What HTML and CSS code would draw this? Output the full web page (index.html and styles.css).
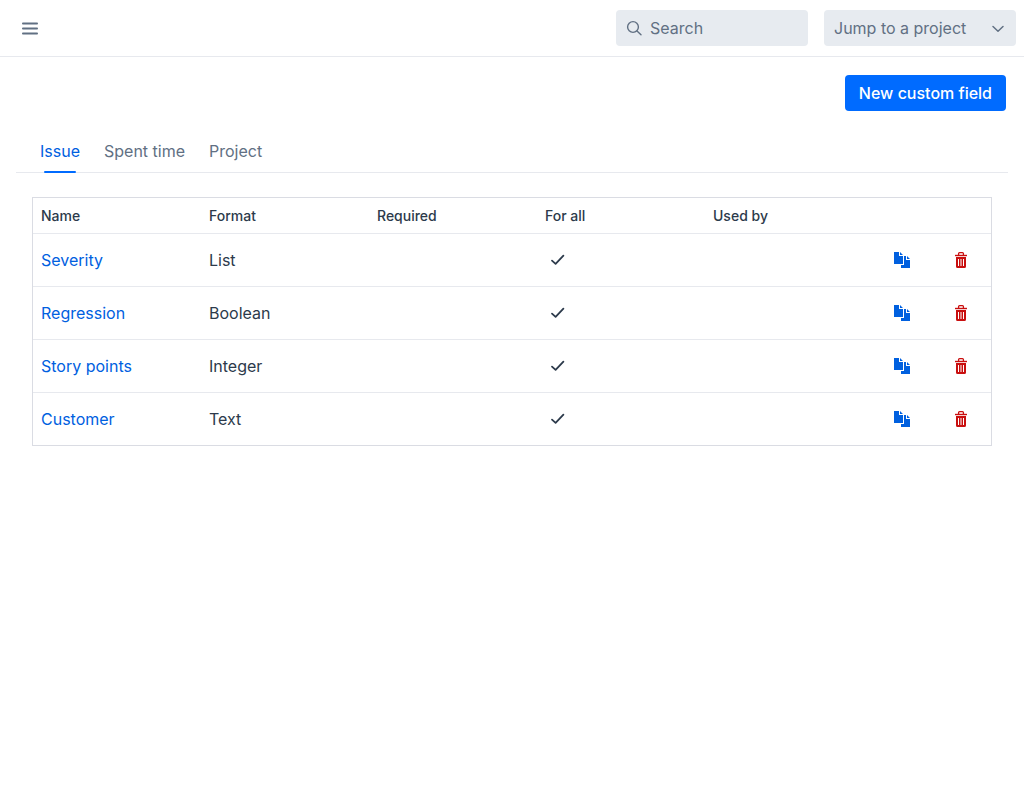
FILE: index.html
```html
<!DOCTYPE html>
<html lang="en">
<head>
<meta charset="utf-8">
<title>Custom fields</title>
<link rel="stylesheet" href="styles.css">
</head>
<body>
<svg class="sprite" aria-hidden="true">
  <symbol id="check" viewBox="0 0 16 16"><path d="M2 8.6l3.6 3.2L13.4 3.6" fill="none" stroke="currentColor" stroke-width="1.8" stroke-linecap="round" stroke-linejoin="round"/></symbol>
  <symbol id="copy" viewBox="0 0 16 16"><path d="M0 0h5v4h4v8H0zM6 0l3 3H6zM10 4h2v4h4v8H7v-3h3zM13 4l3 3h-3z" fill="currentColor"/></symbol>
  <symbol id="trash" viewBox="0 0 16 16"><path d="M2 3.5h12" fill="none" stroke="currentColor" stroke-width="1.4"/><path d="M5.6 3.2V1.6q0-.9.9-.9h3q.9 0 .9.9v1.6" fill="none" stroke="currentColor" stroke-width="1.3"/><path fill-rule="evenodd" d="M3 5h10v9.5q0 1.5-1.5 1.5h-7Q3 16 3 14.500zM5 7v7h1V7zM7.500 7v7h1V7zM10 7v7h1V7z" fill="currentColor"/></symbol>
</svg>
<header class="topbar">
  <button class="menu" aria-label="Menu"><svg width="16" height="14" viewBox="0 0 16 14"><path d="M.9 2.500h14.200M.9 7.500h14.200M.9 12.500h14.200" stroke="currentColor" stroke-width="1.8" stroke-linecap="round"/></svg></button>
  <label class="search">
    <svg width="16" height="16" viewBox="0 0 16 16"><g fill="none" stroke="currentColor" stroke-width="1.4" stroke-linecap="round"><circle cx="7" cy="7" r="5.400"/><path d="M11 11l4 3.800"/></g></svg>
    <input type="text" placeholder="Search" aria-label="Search">
  </label>
  <div class="jump">
    <select aria-label="Jump to a project"><option>Jump to a project</option></select>
    <svg width="14" height="8" viewBox="0 0 14 8"><path d="M2 1.500l5 4.700 5-4.700" fill="none" stroke="currentColor" stroke-width="1.5" stroke-linecap="round" stroke-linejoin="round"/></svg>
  </div>
</header>
<main class="page">
  <div class="actions"><button class="primary">New custom field</button></div>
  <nav class="tabs"><a class="tab active" href="#issue">Issue</a><a class="tab" href="#time">Spent time</a><a class="tab" href="#project">Project</a></nav>
  <div class="panel">
    <table class="fields">
      <colgroup><col class="wide"><col class="wide"><col class="wide"><col class="wide"><col class="wide"><col><col></colgroup>
      <thead><tr><th>Name</th><th>Format</th><th>Required</th><th>For all</th><th>Used by</th><th></th><th></th></tr></thead>
      <tbody>
        <tr><td><a href="#severity">Severity</a></td><td>List</td><td></td><td><svg class="check"><use href="#check"/></svg></td><td></td><td class="tool"><button class="copy" aria-label="Copy Severity"><svg><use href="#copy"/></svg></button></td><td class="tool"><button class="delete" aria-label="Delete Severity"><svg><use href="#trash"/></svg></button></td></tr>
        <tr><td><a href="#regression">Regression</a></td><td>Boolean</td><td></td><td><svg class="check"><use href="#check"/></svg></td><td></td><td class="tool"><button class="copy" aria-label="Copy Regression"><svg><use href="#copy"/></svg></button></td><td class="tool"><button class="delete" aria-label="Delete Regression"><svg><use href="#trash"/></svg></button></td></tr>
        <tr><td><a href="#story-points">Story points</a></td><td>Integer</td><td></td><td><svg class="check"><use href="#check"/></svg></td><td></td><td class="tool"><button class="copy" aria-label="Copy Story points"><svg><use href="#copy"/></svg></button></td><td class="tool"><button class="delete" aria-label="Delete Story points"><svg><use href="#trash"/></svg></button></td></tr>
        <tr><td><a href="#customer">Customer</a></td><td>Text</td><td></td><td><svg class="check"><use href="#check"/></svg></td><td></td><td class="tool"><button class="copy" aria-label="Copy Customer"><svg><use href="#copy"/></svg></button></td><td class="tool"><button class="delete" aria-label="Delete Customer"><svg><use href="#trash"/></svg></button></td></tr>
      </tbody>
    </table>
  </div>
</main>
</body>
</html>
```
FILE: styles.css
```css
* { box-sizing: border-box; }
body { margin: 0; background: #fff; color: #2c3a4b; font: 16px/24px Inter, "Liberation Sans", sans-serif; }
button, input, select { font: inherit; color: inherit; border: 0; background: none; padding: 0; margin: 0; }
button { cursor: pointer; }
a { color: #0060df; text-decoration: none; }
svg { display: block; }
.sprite { display: none; }
.topbar { display: flex; align-items: center; gap: 16px; height: 57px; padding: 0 8px; border-bottom: 1px solid #e7e9ee; color: #617083; }
.menu { margin-right: auto; padding: 14px; }
.search, .jump { display: flex; align-items: center; width: 192px; height: 36px; border-radius: 4px; background: #e7ebf0; }
.search { gap: 8px; padding: 0 10px; }
.search svg { flex: none; }
.search input { min-width: 0; flex: 1; outline: 0; }
.search input::placeholder { color: #617083; opacity: 1; }
.jump { position: relative; }
.jump select { appearance: none; width: 100%; height: 36px; padding: 0 32px 0 10px; }
.jump svg { position: absolute; right: 11px; top: 15px; pointer-events: none; }
.page { padding: 18px 16px; }
.actions { display: flex; justify-content: flex-end; padding-right: 2px; }
.primary { height: 36px; padding: 0 14px; border-radius: 4px; background: #006bff; color: #fff; font-weight: 500; }
.tabs { display: flex; gap: 24px; margin-top: 20px; padding: 0 24px; border-bottom: 1px solid #e7e9ee; }
.tab { position: relative; padding: 8px 0 9px; color: #617083; }
.active { color: #0060df; }
.active::after { content: ""; position: absolute; left: 4px; right: 4px; bottom: -1px; height: 2px; border-radius: 2px; background: #006bff; }
.panel { padding: 24px 16px; }
.fields { width: 100%; table-layout: fixed; border-collapse: separate; border-spacing: 0; border: 1px solid #dadce3; }
.wide { width: 168px; }
th { height: 35px; padding: 0 8px; text-align: left; font-size: 14px; line-height: 20px; font-weight: 500; }
td { height: 53px; padding: 0 8px; border-top: 1px solid #e7e9ee; }
.check { width: 16px; height: 16px; margin-left: 5px; }
.tool { padding: 0 22px 0 21px; }
.tool button { display: block; }
.tool svg { width: 16px; height: 16px; }
.copy { color: #0060df; }
.delete { color: #c90f0f; }
```
